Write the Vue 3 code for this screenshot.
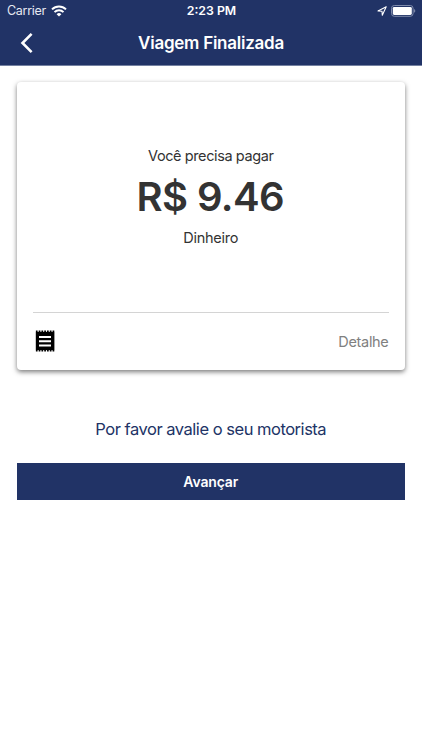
<script setup>
const title = 'Viagem Finalizada'
const amount = 'R$ 9.46'
</script>

<template>
  <div class="screen">
    <header class="header">
      <div class="status">
        <div class="carrier">
          <span class="carrier-name">Carrier</span>
          <svg class="wifi" viewBox="0 0 16 12">
            <path d="M8 11.6 5.6 9.2a3.4 3.4 0 0 1 4.8 0Z" fill="#fff" />
            <path d="M3.5 7.1a6.4 6.4 0 0 1 9 0M1 4.4a10 10 0 0 1 14 0" fill="none" stroke="#fff" stroke-width="2" />
          </svg>
        </div>
        <span class="time">2:23 PM</span>
        <div class="indicators">
          <svg class="location" viewBox="0 0 10 10">
            <path d="M9.2 .8 1 4.9l4 .3.3 4Z" fill="none" stroke="#fff" stroke-width="1.1" stroke-linejoin="round" />
          </svg>
          <svg class="battery" viewBox="0 0 25 12">
            <rect x=".5" y=".5" width="21.6" height="10.8" rx="2.8" fill="none" stroke="#7f8bac" />
            <rect x="1.8" y="1.9" width="19" height="8" rx="1.4" fill="#fff" />
            <path d="M23.2 4v3.8c1.4-.6 1.4-3.2 0-3.8Z" fill="#8c97b5" />
          </svg>
        </div>
      </div>
      <div class="nav">
        <svg class="back" viewBox="0 0 14 22">
          <path d="M11.6 1.8 2.5 11l9.1 9.2" fill="none" stroke="#fff" stroke-width="2.6" />
        </svg>
        <h1 class="title"><span>{{ title }}</span></h1>
        <span class="nav-end"></span>
      </div>
    </header>

    <main class="content">
      <section class="card">
        <div class="summary">
          <p class="label"><span>Você precisa pagar</span></p>
          <p class="amount"><span>{{ amount }}</span></p>
          <p class="method"><span>Dinheiro</span></p>
        </div>
        <div class="card-footer">
          <svg class="receipt" viewBox="0 0 20 22">
            <path d="M.9 1.3h18.4M.9 20.7h18.4" stroke="#000" stroke-width="1.4" stroke-dasharray="1.7 1.08" />
            <rect x=".8" y="1.9" width="18.6" height="18.2" fill="#000" />
            <path d="M4 7h12M4 11.2h12M4 15.4h12" stroke="#fff" stroke-width="2" />
          </svg>
          <span class="detail">Detalhe</span>
        </div>
      </section>
      <p class="rate"><span>Por favor avalie o seu motorista</span></p>
      <button class="next"><span>Avançar</span></button>
    </main>
  </div>
</template>

<style>
body { margin: 0; background: #fff; }
</style>

<style scoped>
.screen {
  width: 422px;
  height: 750px;
  overflow: hidden;
  background: #fff;
  color: #333;
  font-family: Inter, "Liberation Sans", sans-serif;
}
.header {
  box-sizing: border-box;
  height: 66px;
  border-bottom: 1px solid #7481a1;
  background: #213366;
  color: #fff;
}
.status {
  display: grid;
  grid-template-columns: 1fr auto 1fr;
  align-items: center;
  height: 22px;
  padding: 0 6px 0 7px;
}
.carrier { display: flex; align-items: center; gap: 5px; }
.carrier-name { font-size: 12.5px; line-height: 22px; letter-spacing: -0.3px; color: #e6e9f1; }
.wifi { width: 16px; height: 12px; }
.time { font-size: 12.3px; font-weight: 600; line-height: 22px; }
.indicators { display: flex; justify-content: flex-end; align-items: center; gap: 4px; }
.location { width: 10px; height: 10px; }
.battery { width: 25px; height: 12px; }
.nav {
  display: grid;
  grid-template-columns: 34px 1fr 34px;
  align-items: center;
  height: 42px;
}
.back { width: 14px; height: 22px; justify-self: end; }
.title { margin: 0; text-align: center; font-size: 17px; font-weight: 600; line-height: 42px; letter-spacing: -0.25px; }
.content { padding: 16px 17px 0 16.5px; }
.card {
  box-sizing: border-box;
  height: 288px;
  padding: 0 16.5px;
  border-radius: 4px;
  background: #fff;
  box-shadow: 0 2px 5px rgba(0, 0, 0, 0.52);
}
.summary {
  box-sizing: border-box;
  height: 231px;
  padding-top: 63px;
  border-bottom: 1px solid #d4d4d4;
  text-align: center;
}
.label, .amount, .method, .rate { margin: 0; }
.label { font-size: 14.5px; line-height: 22px; letter-spacing: -0.4px; }
.amount { padding-right: 1px; font-size: 40px; font-weight: 600; line-height: 60px; letter-spacing: -0.6px; }
.method { font-size: 14.5px; line-height: 22px; letter-spacing: -0.28px; }
.card-footer {
  display: flex;
  align-items: center;
  justify-content: space-between;
  box-sizing: border-box;
  height: 57px;
  padding-left: 2px;
}
.receipt { width: 20px; height: 22px; margin-bottom: 1px; }
.detail { color: #808080; font-size: 14.5px; letter-spacing: -0.32px; }
.rate { padding-top: 46.5px; text-align: center; color: #213366; font-size: 16.5px; line-height: 24px; letter-spacing: -0.48px; }
.next {
  display: block;
  width: 100%;
  height: 37.4px;
  margin: 22px 0 0;
  padding: 0;
  border: 0;
  background: #213366;
  color: #fff;
  font-family: inherit;
  font-size: 14px;
  font-weight: 600;
  letter-spacing: -0.15px;
  line-height: 37px;
}
</style>
